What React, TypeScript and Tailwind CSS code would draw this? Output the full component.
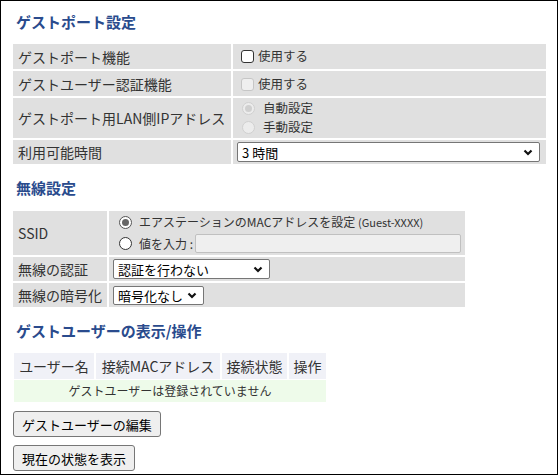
const FONT = "font-['Meiryo','Noto_Sans_CJK_JP',sans-serif]";

function Chevron() {
  return (
    <svg width="10" height="7" viewBox="0 0 10 7" className="shrink-0">
      <polyline points="1.5,1.5 5,5 8.5,1.5" fill="none" stroke="#111" strokeWidth="2.2" />
    </svg>
  );
}

function Select({ value, className }: { value: string; className: string }) {
  return (
    <div
      className={`flex items-center justify-between bg-white border border-[#767676] rounded-[2px] pl-[4px] pr-[6px] text-[13px] leading-none text-black whitespace-nowrap ${className}`}
    >
      <span>{value}</span>
      <Chevron />
    </div>
  );
}

function Checkbox({ disabled }: { disabled?: boolean }) {
  return (
    <span
      className={`inline-block shrink-0 w-[13px] h-[13px] rounded-[3px] border ${
        disabled ? 'border-[#c6c6c6] bg-[#efefef]' : 'border-[#333] bg-white'
      }`}
    />
  );
}

function Radio({ checked, disabled }: { checked?: boolean; disabled?: boolean }) {
  return (
    <span
      className={`inline-flex shrink-0 items-center justify-center w-[13px] h-[13px] rounded-full border ${
        disabled ? 'border-[#d0d0d0] bg-[#ececec]' : checked ? 'border-[#555] bg-white' : 'border-[#333] bg-white'
      }`}
    >
      {checked && <span className={`w-[7px] h-[7px] rounded-full ${disabled ? 'bg-[#cfcfcf]' : 'bg-[#666]'}`} />}
    </span>
  );
}

function Title({ children }: { children: React.ReactNode }) {
  return <h2 className="text-[15px] font-bold text-[#2a4b8d] leading-none pl-[3px]">{children}</h2>;
}

const label = 'bg-[#e0e0e0] flex items-center pl-[5px] text-[14px] whitespace-nowrap';
const value = 'bg-[#e0e0e0] text-[12.5px] whitespace-nowrap';

export default function App() {
  return (
    <div className={`w-[558px] h-[475px] border border-black bg-white text-[#333] leading-none ${FONT}`}>
      {/* ゲストポート設定 */}
      <div className="pt-[13px] pl-[12px]">
        <Title>ゲストポート設定</Title>
      </div>
      <div className="grid grid-cols-[218px_313px] gap-[2px] ml-[12px] mt-[15px]">
        <div className={`${label} h-[25px]`}>ゲストポート機能</div>
        <div className={`${value} flex items-center gap-[4px] pl-[8px]`}>
          <Checkbox />
          <span>使用する</span>
        </div>
        <div className={`${label} h-[25px]`}>ゲストユーザー認証機能</div>
        <div className={`${value} flex items-center gap-[4px] pl-[8px] pt-[2px]`}>
          <Checkbox disabled />
          <span>使用する</span>
        </div>
        <div className={`${label} h-[40px]`}>ゲストポート用LAN側IPアドレス</div>
        <div className={`${value} flex flex-col justify-center gap-[6px] pl-[9px]`}>
          <div className="flex items-center gap-[8px]">
            <Radio checked disabled />
            <span>自動設定</span>
          </div>
          <div className="flex items-center gap-[8px]">
            <Radio disabled />
            <span>手動設定</span>
          </div>
        </div>
        <div className={`${label} h-[24px]`}>利用可能時間</div>
        <div className={`${value} flex items-center pl-[4px]`}>
          <Select value="3 時間" className="w-[303px] h-[20px]" />
        </div>
      </div>

      {/* 無線設定 */}
      <div className="pt-[16px] pl-[12px]">
        <Title>無線設定</Title>
      </div>
      <div className="grid grid-cols-[94px_356px] gap-[2px] ml-[12px] mt-[16px]">
        <div className={`${label} h-[44px]`}>SSID</div>
        <div className="bg-[#e0e0e0] text-[12px] whitespace-nowrap flex flex-col justify-center pl-[10px] gap-[3px]">
          <div className="flex items-center gap-[7px] h-[18px]">
            <Radio checked />
            <span>
              エアステーションのMACアドレスを設定 <span className="text-[11px]">(Guest-XXXX)</span>
            </span>
          </div>
          <div className="flex items-center gap-[7px] h-[19px]">
            <Radio />
            <span className="flex items-center gap-[2px]">
              値を入力 :
              <span className="w-[266px] h-[19px] bg-[#efefef] border border-[#c0c0c0] rounded-[2px]" />
            </span>
          </div>
        </div>
        <div className={`${label} h-[24px]`}>無線の認証</div>
        <div className={`${value} flex items-center pl-[4px]`}>
          <Select value="認証を行わない" className="w-[157px] h-[20px]" />
        </div>
        <div className={`${label} h-[24px]`}>無線の暗号化</div>
        <div className={`${value} flex items-center pl-[4px]`}>
          <Select value="暗号化なし" className="w-[91px] h-[19px]" />
        </div>
      </div>

      {/* ゲストユーザーの表示/操作 */}
      <div className="pt-[16px] pl-[12px]">
        <Title>ゲストユーザーの表示/操作</Title>
      </div>
      <div className="ml-[13px] mt-[15px] w-[312px]">
        <div className="grid grid-cols-[80px_124px_65px_37px] gap-[2px] text-[14px] whitespace-nowrap">
          <div className="bg-[#f0f1f7] h-[26px] flex items-center justify-center">ユーザー名</div>
          <div className="bg-[#f0f1f7] flex items-center justify-center">接続MACアドレス</div>
          <div className="bg-[#f0f1f7] flex items-center justify-center">接続状態</div>
          <div className="bg-[#f0f1f7] flex items-center justify-center">操作</div>
        </div>
        <div className="bg-[#eefbea] h-[22px] mt-[1px] flex items-center justify-center text-[12px]">
          ゲストユーザーは登録されていません
        </div>
      </div>
      <div className="flex flex-col items-start gap-[8px] ml-[12px] mt-[9px]">
        <button className="h-[26px] px-[8px] bg-[#efefef] border border-[#767676] rounded-[3px] text-[13px] leading-none text-black">
          ゲストユーザーの編集
        </button>
        <button className="h-[26px] px-[8px] bg-[#efefef] border border-[#767676] rounded-[3px] text-[13px] leading-none text-black">
          現在の状態を表示
        </button>
      </div>
    </div>
  );
}
